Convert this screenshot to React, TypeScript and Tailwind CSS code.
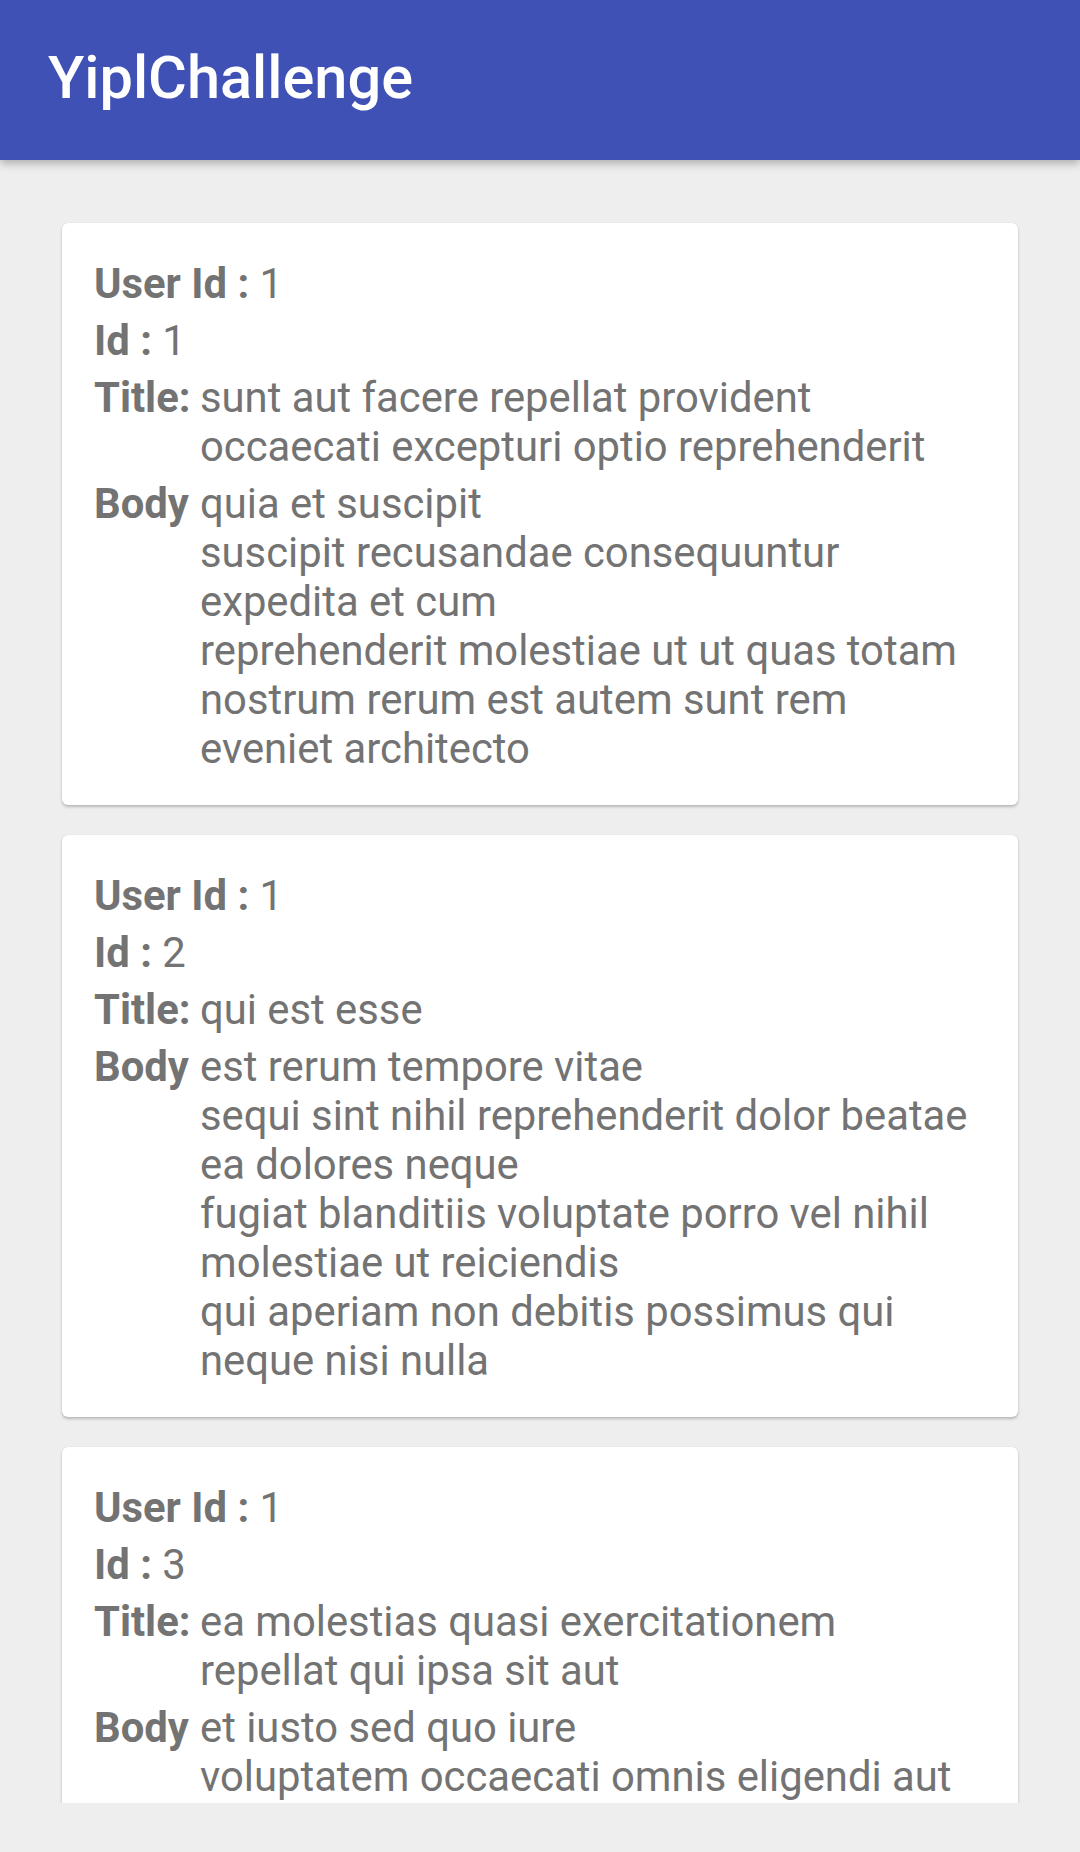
import React from "react"

type Post = {
  userId: number
  id: number
  title: string[]
  body: string[]
}

const posts: Post[] = [
  {
    userId: 1,
    id: 1,
    title: ["sunt aut facere repellat provident", "occaecati excepturi optio reprehenderit"],
    body: [
      "quia et suscipit",
      "suscipit recusandae consequuntur",
      "expedita et cum",
      "reprehenderit molestiae ut ut quas totam",
      "nostrum rerum est autem sunt rem",
      "eveniet architecto",
    ],
  },
  {
    userId: 1,
    id: 2,
    title: ["qui est esse"],
    body: [
      "est rerum tempore vitae",
      "sequi sint nihil reprehenderit dolor beatae",
      "ea dolores neque",
      "fugiat blanditiis voluptate porro vel nihil",
      "molestiae ut reiciendis",
      "qui aperiam non debitis possimus qui",
      "neque nisi nulla",
    ],
  },
  {
    userId: 1,
    id: 3,
    title: ["ea molestias quasi exercitationem", "repellat qui ipsa sit aut"],
    // the rest of the body is scrolled out of view
    body: ["et iusto sed quo iure", "voluptatem occaecati omnis eligendi aut"],
  },
]

function Lines({ lines }: { lines: string[] }) {
  return (
    <div className="flex flex-col">
      {lines.map((l, i) => (
        <span key={i} className="whitespace-nowrap">
          {l}
        </span>
      ))}
    </div>
  )
}

function PostCard({ post }: { post: Post }) {
  return (
    <div className="bg-white rounded-[6px] shadow-[0_2px_3px_rgba(0,0,0,0.22),0_0_1px_rgba(0,0,0,0.15)] pl-[32px] pr-[24px] pt-[36px] pb-[32px]">
      <div className="flex flex-col gap-[8px] text-[41.8px] leading-[49px] text-[#737373]">
        <div>
          <span className="font-bold">User Id : </span>
          {post.userId}
        </div>
        <div>
          <span className="font-bold">Id : </span>
          {post.id}
        </div>
        <div className="flex">
          <span className="font-bold w-[106px] shrink-0">Title:</span>
          <Lines lines={post.title} />
        </div>
        <div className="flex">
          <span className="font-bold w-[106px] shrink-0">Body</span>
          <Lines lines={post.body} />
        </div>
      </div>
    </div>
  )
}

export default function App() {
  return (
    <div className="w-[1080px] h-[1852px] bg-[#eeeeee] flex flex-col font-['Roboto',sans-serif]">
      <header className="relative z-10 h-[160px] shrink-0 bg-[#3f51b5] flex items-center pl-[48px] shadow-[0_4px_8px_rgba(0,0,0,0.25)]">
        <h1 className="text-white text-[59.5px] font-medium leading-none -mt-[2px]">YiplChallenge</h1>
      </header>
      <main className="h-[1643px] shrink-0 overflow-hidden">
        <div className="flex flex-col gap-[30px] pt-[63px] px-[62px]">
          {posts.map((p) => (
            <PostCard key={p.id} post={p} />
          ))}
        </div>
      </main>
    </div>
  )
}
